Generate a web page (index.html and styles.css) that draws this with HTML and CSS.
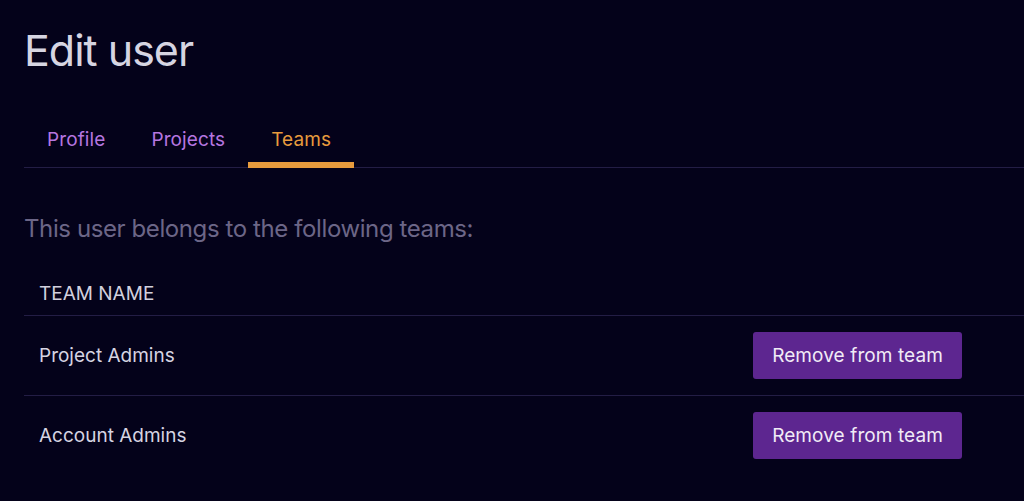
FILE: index.html
```html
<!DOCTYPE html>
<html lang="en">
<head>
    <meta charset="UTF-8">
    <meta name="viewport" content="width=device-width, initial-scale=1.0">
    <title>Edit user</title>
    <link rel="stylesheet" href="styles.css">
</head>
<body>
    <div class="page">
        <h1>Edit user</h1>

        <!-- Tabs -->
        <nav class="tabs">
            <a class="tab" href="#">Profile</a>
            <a class="tab" href="#">Projects</a>
            <a class="tab active" href="#">Teams</a>
        </nav>

        <p class="intro">This user belongs to the following teams:</p>

        <table class="teams">
            <thead>
                <tr>
                    <th>TEAM NAME</th>
                    <th></th>
                </tr>
            </thead>
            <tbody>
                <tr>
                    <td>Project Admins</td>
                    <td class="actions"><button class="btn">Remove from team</button></td>
                </tr>
                <tr>
                    <td>Account Admins</td>
                    <td class="actions"><button class="btn">Remove from team</button></td>
                </tr>
            </tbody>
        </table>
    </div>
</body>
</html>
```

FILE: styles.css
```css
body {
    margin: 0;
    padding: 0;
    background-color: #04021a;
    color: #d6d4e2;
    font-family: Inter, "Noto Sans", sans-serif;
}

.page {
    padding: 24px 0 0 24px;
}

h1 {
    margin: 0;
    font-size: 43px;
    font-weight: 400;
    line-height: 52px;
    letter-spacing: -1px;
    color: #d6d5e2;
}

.tabs {
    display: flex;
    margin-top: 52px;
    border-bottom: 1px solid #231d45;
}

.tab {
    padding: 0 23px 11px;
    font-size: 19px;
    line-height: 23px;
    letter-spacing: 0.1px;
    color: #b676e0;
    text-decoration: none;
    border-bottom: 6px solid transparent;
    margin-bottom: -1px;
}

.tab.active {
    color: #e79b3d;
    border-bottom-color: #e79b3d;
}

.intro {
    margin: 46px 0 0;
    font-size: 24px;
    line-height: 30px;
    letter-spacing: -0.4px;
    color: #6c6687;
}

/* Team list */
.teams {
    width: 100%;
    margin-top: 38px;
    border-collapse: collapse;
}

.teams th {
    padding: 0 15px 10px;
    text-align: left;
    font-size: 19px;
    font-weight: 400;
    line-height: 23px;
    color: #d2d0de;
    border-bottom: 1px solid #231d45;
}

.teams td {
    padding: 16px 15px;
    font-size: 19px;
    line-height: 23px;
    color: #d6d4e2;
    vertical-align: middle;
    border-bottom: 1px solid #231d45;
}

.teams tbody tr:last-child td {
    border-bottom: none;
}

.teams .actions {
    padding-right: 62px;
}

.btn {
    display: block;
    margin-left: auto;
    height: 47px;
    padding: 0 19px;
    font-family: inherit;
    font-size: 19px;
    letter-spacing: 0.1px;
    color: #f1ebf6;
    background-color: #5d2690;
    border: none;
    border-radius: 3px;
    cursor: pointer;
}
```
